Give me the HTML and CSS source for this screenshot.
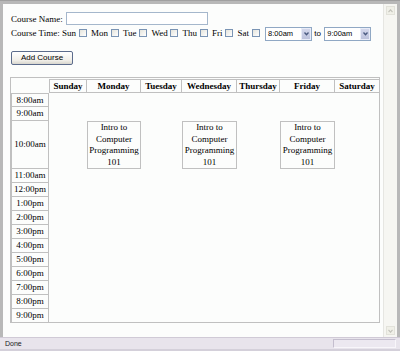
FILE: index.html
```html
<!DOCTYPE html>
<html lang="en">

<head>
    <meta charset="UTF-8">
    <title>Course Scheduler</title>
    <link rel="stylesheet" href="styles.css">
</head>

<body>
    <div class="window">
        <div class="viewport">
            <div class="page">
                <div class="field">
                    <label>Course Name:</label>
                    <input type="text" class="text-input">
                </div>
                <div class="field time-row">
                    Course Time: Sun <span class="check"></span>
                    Mon <span class="check"></span>
                    Tue <span class="check"></span>
                    Wed <span class="check"></span>
                    Thu <span class="check"></span>
                    Fri <span class="check"></span>
                    Sat <span class="check"></span>
                    <span class="select">
                        <span class="select-value">8:00am</span>
                        <span class="select-arrow"><svg width="5" height="4" viewBox="0 0 5 4"><path d="M0.5 0.5 L2.5 2.8 L4.5 0.5" fill="none" stroke="#4a5a80" stroke-width="1.3"/></svg></span>
                    </span>
                    <span class="to">to</span>
                    <span class="select">
                        <span class="select-value">9:00am</span>
                        <span class="select-arrow"><svg width="5" height="4" viewBox="0 0 5 4"><path d="M0.5 0.5 L2.5 2.8 L4.5 0.5" fill="none" stroke="#4a5a80" stroke-width="1.3"/></svg></span>
                    </span>
                </div>
                <button class="add-button">Add Course</button>

                <table class="schedule">
                    <colgroup>
                        <col class="col-time">
                        <col class="col-sun">
                        <col class="col-mon">
                        <col class="col-tue">
                        <col class="col-wed">
                        <col class="col-thu">
                        <col class="col-fri">
                        <col class="col-sat">
                    </colgroup>
                    <thead>
                        <tr>
                            <th class="corner"></th>
                            <th class="first-day">Sunday</th>
                            <th>Monday</th>
                            <th>Tuesday</th>
                            <th>Wednesday</th>
                            <th>Thursday</th>
                            <th>Friday</th>
                            <th class="last-day">Saturday</th>
                        </tr>
                    </thead>
                    <tbody>
                        <tr class="first-row">
                            <td class="time">8:00am</td><td></td><td></td><td></td><td></td><td></td><td></td><td></td>
                        </tr>
                        <tr>
                            <td class="time">9:00am</td><td></td><td></td><td></td><td></td><td></td><td></td><td></td>
                        </tr>
                        <tr>
                            <td class="time">10:00am</td>
                            <td></td>
                            <td class="course">Intro to Computer Programming 101</td>
                            <td></td>
                            <td class="course">Intro to Computer Programming 101</td>
                            <td></td>
                            <td class="course">Intro to Computer Programming 101</td>
                            <td></td>
                        </tr>
                        <tr>
                            <td class="time">11:00am</td><td></td><td></td><td></td><td></td><td></td><td></td><td></td>
                        </tr>
                        <tr>
                            <td class="time">12:00pm</td><td></td><td></td><td></td><td></td><td></td><td></td><td></td>
                        </tr>
                        <tr>
                            <td class="time">1:00pm</td><td></td><td></td><td></td><td></td><td></td><td></td><td></td>
                        </tr>
                        <tr>
                            <td class="time">2:00pm</td><td></td><td></td><td></td><td></td><td></td><td></td><td></td>
                        </tr>
                        <tr>
                            <td class="time">3:00pm</td><td></td><td></td><td></td><td></td><td></td><td></td><td></td>
                        </tr>
                        <tr>
                            <td class="time">4:00pm</td><td></td><td></td><td></td><td></td><td></td><td></td><td></td>
                        </tr>
                        <tr>
                            <td class="time">5:00pm</td><td></td><td></td><td></td><td></td><td></td><td></td><td></td>
                        </tr>
                        <tr>
                            <td class="time">6:00pm</td><td></td><td></td><td></td><td></td><td></td><td></td><td></td>
                        </tr>
                        <tr>
                            <td class="time">7:00pm</td><td></td><td></td><td></td><td></td><td></td><td></td><td></td>
                        </tr>
                        <tr>
                            <td class="time">8:00pm</td><td></td><td></td><td></td><td></td><td></td><td></td><td></td>
                        </tr>
                        <tr class="last-row">
                            <td class="time">9:00pm</td><td></td><td></td><td></td><td></td><td></td><td></td><td></td>
                        </tr>
                    </tbody>
                </table>
            </div>
            <div class="scrollbar">
                <span class="scroll-arrow"><svg width="5" height="4" viewBox="0 0 5 4"><path d="M0.5 3.2 L2.5 0.8 L4.5 3.2" fill="none" stroke="#c4c4bc" stroke-width="1.2"/></svg></span>
                <span class="scroll-arrow"><svg width="5" height="4" viewBox="0 0 5 4"><path d="M0.5 0.8 L2.5 3.2 L4.5 0.8" fill="none" stroke="#c4c4bc" stroke-width="1.2"/></svg></span>
            </div>
        </div>
        <div class="statusbar">
            <span class="status-text">Done</span>
            <span class="status-panel"></span>
        </div>
    </div>
</body>

</html>
```

FILE: styles.css
```css
body {
    margin: 0;
    padding: 0;
}

.window {
    width: 400px;
    height: 351px;
    box-sizing: border-box;
    display: flex;
    flex-direction: column;
    background-color: #b8b8b8;
    padding: 3px 3px 0 3px;
    border-top: 1px solid #a0a0a0;
}

.viewport {
    flex: 1;
    display: flex;
    min-height: 0;
}

.page {
    flex: 1;
    background-color: #fcfdfc;
    padding: 8px 0 0 8px;
    overflow: hidden;
    font-family: "Liberation Serif", serif;
    font-size: 9px;
    color: #000;
}

.field {
    display: flex;
    align-items: center;
    height: 13px;
    white-space: nowrap;
}

.text-input {
    width: 142px;
    height: 13px;
    box-sizing: border-box;
    margin: 0 0 0 3px;
    padding: 0;
    border: 1px solid #a5b7cc;
    background-color: #fff;
}

.time-row {
    display: block;
    height: 14px;
    line-height: 14px;
    margin-top: 1px;
}

.check {
    display: inline-block;
    width: 8px;
    height: 8px;
    box-sizing: border-box;
    border: 1px solid #7a94b4;
    background: linear-gradient(135deg, #e4e4dc, #ffffff);
    vertical-align: -1px;
    margin: 0 2px 0 0.5px;
}

.select {
    display: inline-flex;
    align-items: stretch;
    width: 47px;
    height: 14px;
    box-sizing: border-box;
    border: 1px solid #90a8c4;
    background-color: #fff;
    vertical-align: middle;
    margin-left: 1px;
    font-family: "Liberation Sans", sans-serif;
    font-size: 7.5px;
    line-height: 12px;
}

.select-value {
    flex: 1;
    padding-left: 2px;
}

.select-arrow {
    width: 10px;
    display: flex;
    align-items: center;
    justify-content: center;
    background: linear-gradient(#d4d8ec, #bcc2dc);
    border: 1px solid #e8ecf8;
    box-sizing: border-box;
}

.to {
    font-family: "Liberation Sans", sans-serif;
    font-size: 8px;
}

.add-button {
    display: block;
    width: 62px;
    height: 14px;
    margin-top: 11px;
    padding: 0;
    border: 1px solid #5c6c8c;
    border-radius: 2px;
    background: linear-gradient(#ffffff, #f0eee8 70%, #d8d6ce);
    font-family: "Liberation Sans", sans-serif;
    font-size: 8px;
    line-height: 12px;
    color: #000;
}

.schedule {
    width: 370px;
    box-sizing: border-box;
    table-layout: fixed;
    border-collapse: separate;
    border-spacing: 0;
    border: 1px solid #c0c0c0;
    padding-top: 1px;
    margin: 12px 0 0 -1px;
}

.col-time { width: 38px; }
.col-sun { width: 38px; }
.col-mon { width: 54px; }
.col-tue { width: 41px; }
.col-wed { width: 55px; }
.col-thu { width: 43px; }
.col-fri { width: 55px; }
.col-sat { width: 44px; }

.schedule th,
.schedule td {
    padding: 0;
    text-align: center;
    vertical-align: middle;
    overflow: hidden;
}

.schedule th {
    font-weight: bold;
    line-height: 12px;
    border: 1px solid #c0c0c0;
    border-left: 0;
    white-space: nowrap;
}

.schedule th.corner {
    border: 0;
}

.schedule th.first-day {
    border-left: 1px solid #c0c0c0;
}

.schedule th.last-day {
    border-right: 0;
}

.time {
    line-height: 13px;
    border: 1px solid #c0c0c0;
    border-top: 0;
    white-space: nowrap;
}

.first-row .time {
    border-top: 1px solid #c0c0c0;
    line-height: 12px;
}

.last-row .time {
    border-bottom: 0;
}

.course {
    line-height: 11.5px;
    border: 1px solid #c0c0c0;
}

.scrollbar {
    width: 13px;
    display: flex;
    flex-direction: column;
    justify-content: space-between;
    align-items: center;
    background-color: #f6f6f2;
    border-left: 1px solid #e6e6e2;
    padding: 2px 0;
}

.scroll-arrow {
    width: 9px;
    height: 9px;
    box-sizing: border-box;
    display: flex;
    align-items: center;
    justify-content: center;
    background-color: #f0f0e8;
    border: 1px solid #e2e2da;
}

.statusbar {
    height: 14px;
    box-sizing: border-box;
    display: flex;
    align-items: center;
    justify-content: space-between;
    margin: 0 -3px;
    padding: 0 4px 0 5px;
    background-color: #e8e4ec;
    border-top: 1px solid #d0cad6;
    border-bottom: 2px solid #d4d0da;
    font-family: "Liberation Sans", sans-serif;
    font-size: 7px;
    color: #202020;
}

.status-panel {
    width: 63px;
    height: 9px;
    box-sizing: border-box;
    border: 1px solid #c4bece;
    border-right-color: #f8f6fa;
    border-bottom-color: #f8f6fa;
    background-color: #ece8f0;
}
```
